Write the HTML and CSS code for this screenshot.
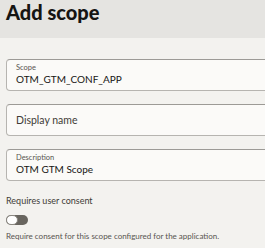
FILE: index.html
```html
<!DOCTYPE html>
<html lang="en">
<head>
  <meta charset="UTF-8" />
  <title>Add scope</title>
  <link rel="stylesheet" href="styles.css">
</head>
<body>
  <header class="page-header">
    <h1>Add scope</h1>
  </header>

  <main class="form">
    <div class="field">
      <label>Scope</label>
      <div class="value">OTM_GTM_CONF_APP</div>
    </div>

    <div class="field">
      <div class="placeholder">Display name</div>
    </div>

    <div class="field">
      <label>Description</label>
      <div class="value">OTM GTM Scope</div>
    </div>

    <div class="consent">
      <div class="consent-label">Requires user consent</div>
      <div class="switch"><span class="knob"></span></div>
      <div class="help">Require consent for this scope configured for the application.</div>
    </div>
  </main>
</body>
</html>
```

FILE: styles.css
```css
* {
  margin: 0;
  padding: 0;
  box-sizing: border-box;
  font-family: Lato, "Noto Sans", sans-serif;
}

html, body {
  width: 265px;
  height: 248px;
  overflow: hidden;
}

body {
  background: #f3f2ef;
  color: #161513;
}

.page-header {
  background: #e5e4e1;
  height: 38px;
  padding: 0 6px;
}

.page-header h1 {
  font-size: 20px;
  font-weight: 900;
  line-height: 24px;
}

.form {
  padding: 21px 0 0 6px;
  width: 330px;
}

.field {
  height: 32px;
  background: #fbfaf8;
  border: 1px solid #b6b4b0;
  border-top-color: #9c9a96;
  border-radius: 4px;
  padding: 0 9px 1px;
  margin-bottom: 13px;
  display: flex;
  flex-direction: column;
  justify-content: center;
}

.field label {
  font-size: 7.5px;
  line-height: 10px;
  color: #58554f;
}

.field .value {
  font-size: 10px;
  line-height: 13px;
}

.field .placeholder {
  font-size: 10.5px;
  color: #3f3c37;
}

.consent {
  padding-top: 1px;
}

.consent-label {
  font-size: 9px;
  line-height: 12px;
  color: #3f3c37;
}

.switch {
  width: 22px;
  height: 10px;
  margin: 8px 0 5px;
  border-radius: 5px;
  background: #68655f;
  position: relative;
}

.switch .knob {
  position: absolute;
  left: 0;
  top: 0;
  width: 12px;
  height: 10px;
  border-radius: 5px;
  background: #fff;
  border: 1px solid #8a8781;
}

.help {
  font-size: 8px;
  line-height: 12px;
  color: #58554f;
}
```
